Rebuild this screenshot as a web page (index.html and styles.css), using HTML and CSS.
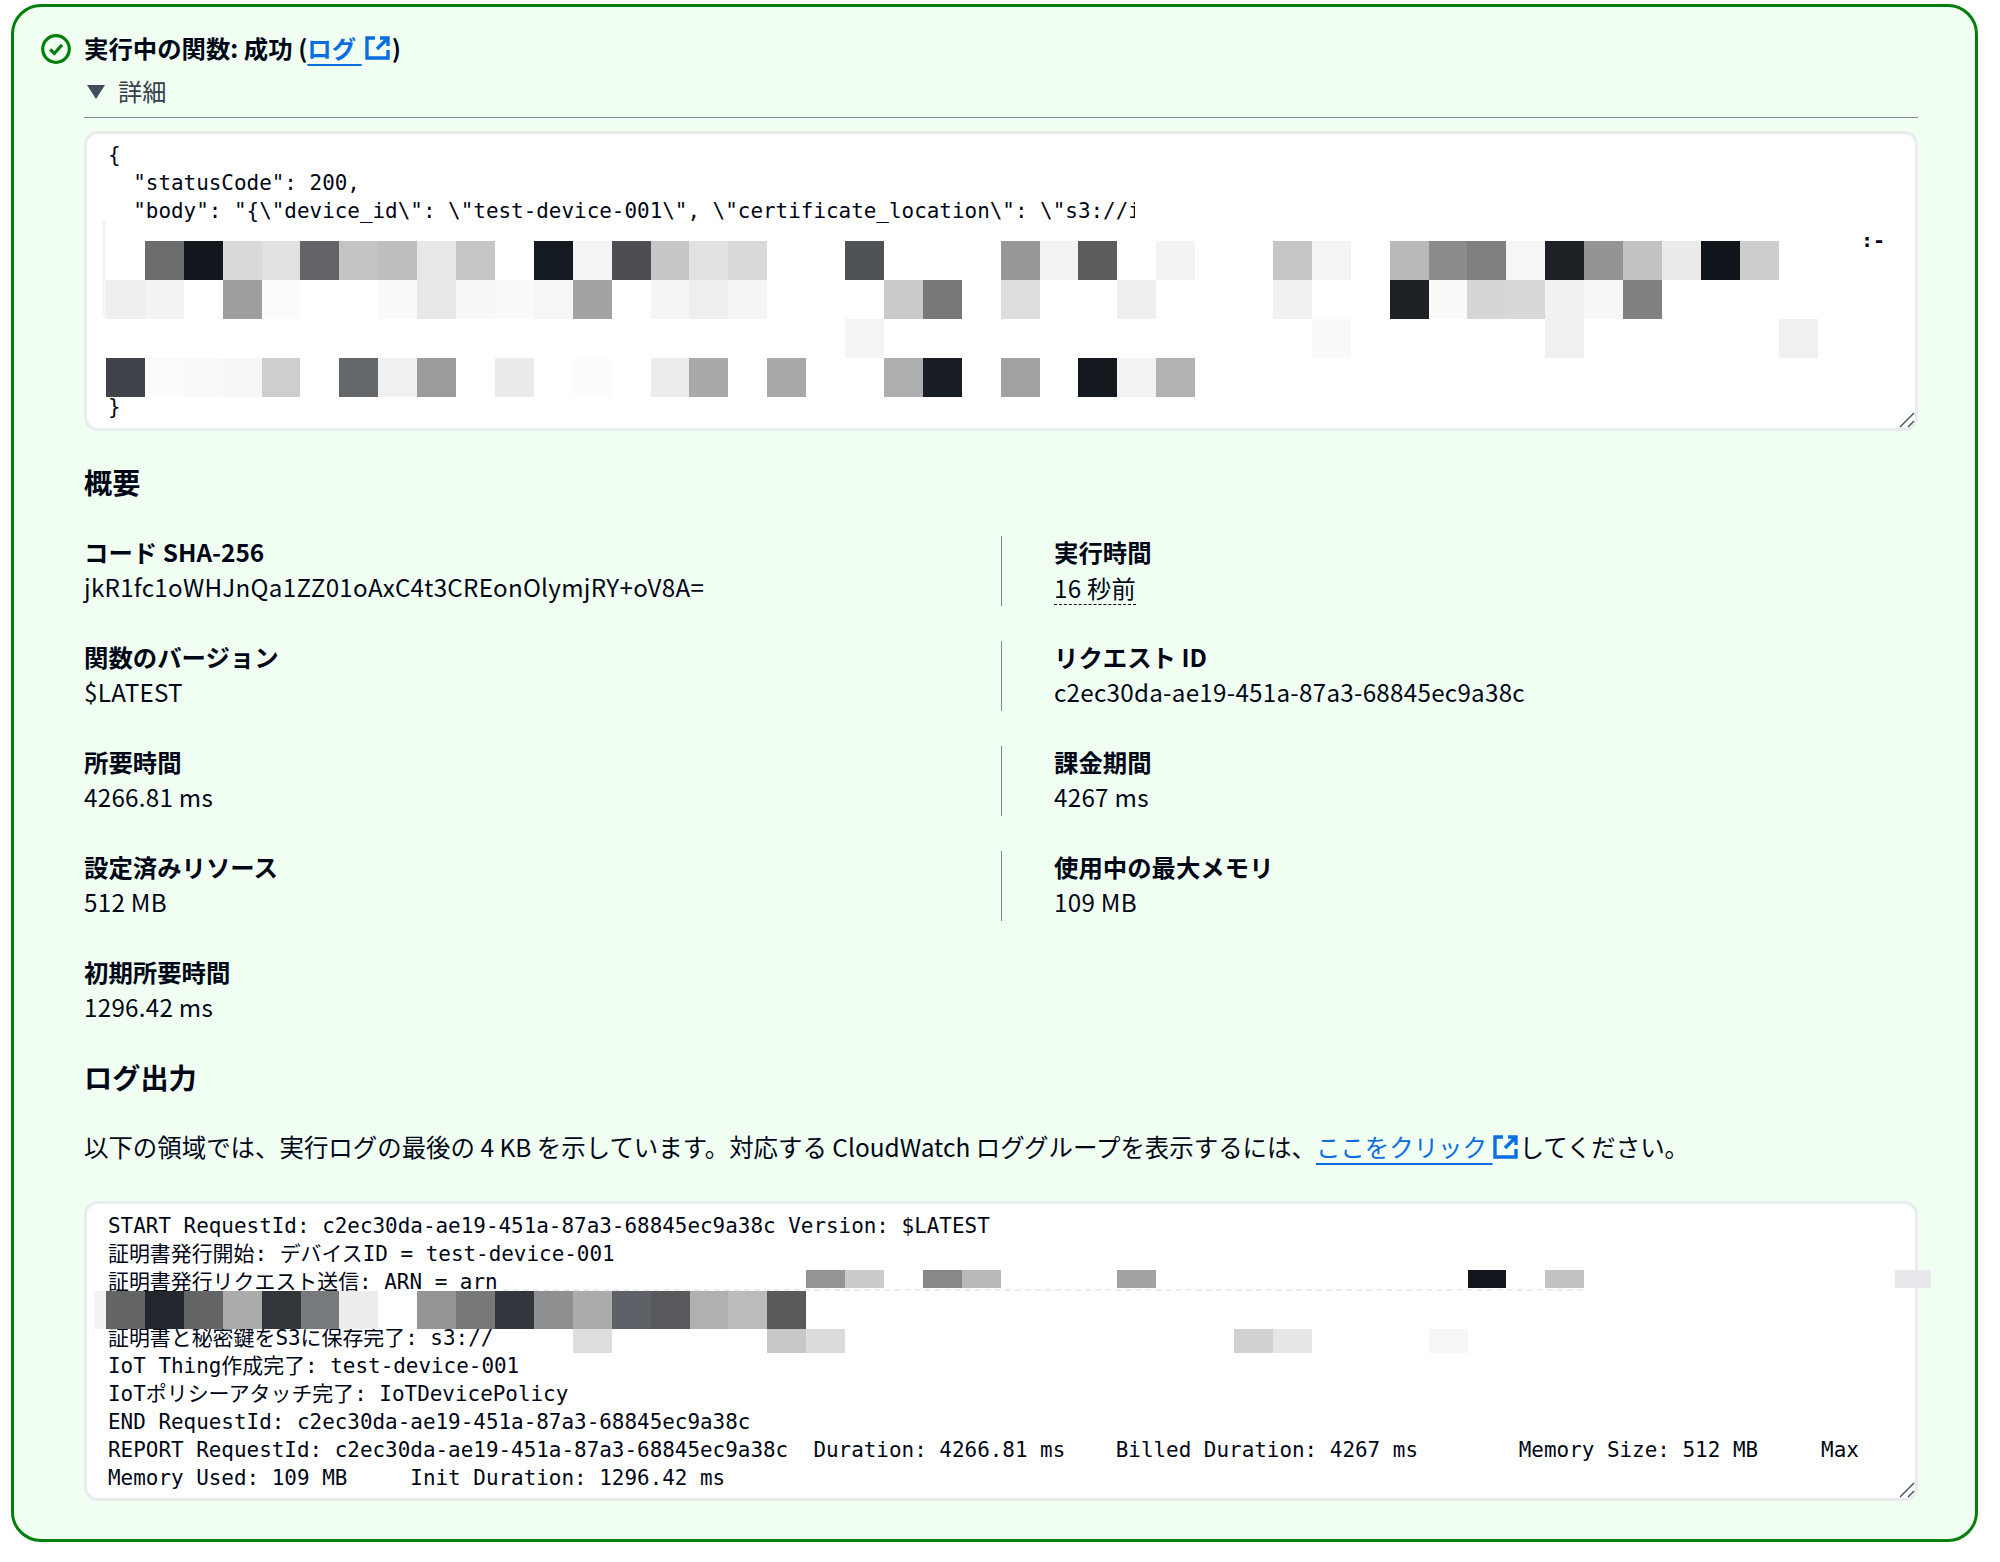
FILE: index.html
```html
<!DOCTYPE html>
<html lang="ja">
<head>
<meta charset="utf-8">
<title>実行中の関数: 成功</title>
<link rel="stylesheet" href="styles.css">
</head>
<body>
<main class="panel">
  <svg class="status-icon" viewBox="0 0 28 28"><circle cx="14" cy="14" r="12.4" fill="none" stroke="#037f0c" stroke-width="3"/><path d="M8.6 14.4l3.8 3.8 7.2-8" fill="none" stroke="#037f0c" stroke-width="3"/></svg>
  <div class="content">
    <h1 class="title">実行中の関数: 成功 (<a class="link" href="#">ログ </a><svg class="ext-icon" viewBox="0 0 25 24"><path d="M10 2H2v20h21v-8M15 2h8v8M23 2L12 13" fill="none" stroke="#0a6ee0" stroke-width="3.4"/></svg>)</h1>
    <div class="summary"><span class="caret"></span>詳細</div>
    <div class="box result">
<pre class="mono">{
  "statusCode": 200,
  "body": "{\"device_id\": \"test-device-001\", \"certificate_location\": \"s3://i






}</pre>
      <div class="cover-strip"></div>
      <svg class="mosaic mosaic-top" viewBox="0 0 44 4" preserveAspectRatio="none" shape-rendering="crispEdges">
        <g>
          <rect x="1" y="0" width="1" height="1" fill="#6b6c6e"/><rect x="2" y="0" width="1" height="1" fill="#12171d"/><rect x="3" y="0" width="1" height="1" fill="#d9dbdb"/><rect x="4" y="0" width="1" height="1" fill="#e2e2e2"/><rect x="5" y="0" width="1" height="1" fill="#636468"/><rect x="6" y="0" width="1" height="1" fill="#c4c4c4"/><rect x="7" y="0" width="1" height="1" fill="#bdbec0"/><rect x="8" y="0" width="1" height="1" fill="#e7e9e8"/><rect x="9" y="0" width="1" height="1" fill="#c6c6c6"/><rect x="11" y="0" width="1" height="1" fill="#141a21"/><rect x="12" y="0" width="1" height="1" fill="#f4f4f4"/><rect x="13" y="0" width="1" height="1" fill="#4d4e52"/><rect x="14" y="0" width="1" height="1" fill="#c6c7c9"/><rect x="15" y="0" width="1" height="1" fill="#e2e2e2"/><rect x="16" y="0" width="1" height="1" fill="#d9d9d9"/><rect x="19" y="0" width="1" height="1" fill="#4f5357"/><rect x="23" y="0" width="1" height="1" fill="#979797"/><rect x="24" y="0" width="1" height="1" fill="#f2f2f2"/><rect x="25" y="0" width="1" height="1" fill="#5b5c5e"/><rect x="27" y="0" width="1" height="1" fill="#f3f3f3"/><rect x="30" y="0" width="1" height="1" fill="#c6c6c6"/><rect x="31" y="0" width="1" height="1" fill="#f4f4f4"/><rect x="33" y="0" width="1" height="1" fill="#b9b9b9"/><rect x="34" y="0" width="1" height="1" fill="#8a8b8d"/><rect x="35" y="0" width="1" height="1" fill="#7e7f81"/><rect x="36" y="0" width="1" height="1" fill="#f6f6f6"/><rect x="37" y="0" width="1" height="1" fill="#1e2125"/><rect x="38" y="0" width="1" height="1" fill="#939496"/><rect x="39" y="0" width="1" height="1" fill="#c2c2c2"/><rect x="40" y="0" width="1" height="1" fill="#eaebea"/><rect x="41" y="0" width="1" height="1" fill="#10151b"/><rect x="42" y="0" width="1" height="1" fill="#cdcdcd"/>
        </g>
        <g>
          <rect x="0" y="1" width="1" height="1" fill="#eeeeee"/><rect x="1" y="1" width="1" height="1" fill="#f3f3f3"/><rect x="3" y="1" width="1" height="1" fill="#9d9e9f"/><rect x="4" y="1" width="1" height="1" fill="#fbfbfb"/><rect x="7" y="1" width="1" height="1" fill="#fafafa"/><rect x="8" y="1" width="1" height="1" fill="#e8e8e8"/><rect x="9" y="1" width="1" height="1" fill="#f8f8f8"/><rect x="10" y="1" width="1" height="1" fill="#fafafa"/><rect x="11" y="1" width="1" height="1" fill="#f5f6f5"/><rect x="12" y="1" width="1" height="1" fill="#a2a3a4"/><rect x="14" y="1" width="1" height="1" fill="#f5f5f5"/><rect x="15" y="1" width="1" height="1" fill="#eeeeee"/><rect x="16" y="1" width="1" height="1" fill="#f5f5f5"/><rect x="20" y="1" width="1" height="1" fill="#c9cbca"/><rect x="21" y="1" width="1" height="1" fill="#77787a"/><rect x="23" y="1" width="1" height="1" fill="#dcdedd"/><rect x="26" y="1" width="1" height="1" fill="#efefef"/><rect x="30" y="1" width="1" height="1" fill="#f0f2f1"/><rect x="33" y="1" width="1" height="1" fill="#1e2226"/><rect x="34" y="1" width="1" height="1" fill="#fafafa"/><rect x="35" y="1" width="1" height="1" fill="#d6d6d6"/><rect x="36" y="1" width="1" height="1" fill="#d8d8d8"/><rect x="37" y="1" width="1" height="1" fill="#f0f1f0"/><rect x="38" y="1" width="1" height="1" fill="#f8f8f8"/><rect x="39" y="1" width="1" height="1" fill="#808183"/>
        </g>
        <g>
          <rect x="19" y="2" width="1" height="1" fill="#f4f4f4"/><rect x="31" y="2" width="1" height="1" fill="#f9f9f9"/><rect x="37" y="2" width="1" height="1" fill="#f0f0f0"/><rect x="43" y="2" width="1" height="1" fill="#f0f0f0"/>
        </g>
        <g>
          <rect x="0" y="3" width="1" height="1" fill="#40444a"/><rect x="1" y="3" width="1" height="1" fill="#fbfbfb"/><rect x="2" y="3" width="1" height="1" fill="#f9f9f9"/><rect x="3" y="3" width="1" height="1" fill="#f6f7f6"/><rect x="4" y="3" width="1" height="1" fill="#cdcfce"/><rect x="6" y="3" width="1" height="1" fill="#64676a"/><rect x="7" y="3" width="1" height="1" fill="#f1f1f1"/><rect x="8" y="3" width="1" height="1" fill="#9a9b9c"/><rect x="10" y="3" width="1" height="1" fill="#ebebeb"/><rect x="12" y="3" width="1" height="1" fill="#fcfcfc"/><rect x="14" y="3" width="1" height="1" fill="#ececec"/><rect x="15" y="3" width="1" height="1" fill="#a8a9a8"/><rect x="17" y="3" width="1" height="1" fill="#a8a9aa"/><rect x="20" y="3" width="1" height="1" fill="#adaeb0"/><rect x="21" y="3" width="1" height="1" fill="#191e25"/><rect x="23" y="3" width="1" height="1" fill="#a2a2a3"/><rect x="25" y="3" width="1" height="1" fill="#14191f"/><rect x="26" y="3" width="1" height="1" fill="#f2f4f3"/><rect x="27" y="3" width="1" height="1" fill="#b1b2b3"/>
        </g>
      </svg>
      <span class="stray mono">:-</span>
      <svg class="grip" viewBox="0 0 16 16"><path d="M1 15L15 1M9 15l6-6" stroke="#414d5c" stroke-width="1.4" fill="none"/></svg>
    </div>

    <h2 class="heading heading-summary">概要</h2>
    <dl class="facts">
      <div class="fact"><dt>コード SHA-256</dt><dd>jkR1fc1oWHJnQa1ZZ01oAxC4t3CREonOlymjRY+oV8A=</dd></div>
      <div class="fact fact-right"><dt>実行時間</dt><dd><span class="ago">16 秒前</span></dd></div>
      <div class="fact"><dt>関数のバージョン</dt><dd>$LATEST</dd></div>
      <div class="fact fact-right"><dt>リクエスト ID</dt><dd>c2ec30da-ae19-451a-87a3-68845ec9a38c</dd></div>
      <div class="fact"><dt>所要時間</dt><dd>4266.81 ms</dd></div>
      <div class="fact fact-right"><dt>課金期間</dt><dd>4267 ms</dd></div>
      <div class="fact"><dt>設定済みリソース</dt><dd>512 MB</dd></div>
      <div class="fact fact-right"><dt>使用中の最大メモリ</dt><dd>109 MB</dd></div>
      <div class="fact"><dt>初期所要時間</dt><dd>1296.42 ms</dd></div>
    </dl>

    <h2 class="heading heading-log">ログ出力</h2>
    <p class="intro">以下の領域では、実行ログの最後の 4 KB を示しています。対応する CloudWatch ロググループを表示するには、<a class="link" href="#">ここをクリック </a><svg class="ext-icon" viewBox="0 0 25 24"><path d="M10 2H2v20h21v-8M15 2h8v8M23 2L12 13" fill="none" stroke="#0a6ee0" stroke-width="3.4"/></svg>してください。</p>
    <div class="box log">
<pre class="mono">START RequestId: c2ec30da-ae19-451a-87a3-68845ec9a38c Version: $LATEST
証明書発行開始: デバイスID = test-device-001
証明書発行リクエスト送信: ARN = arn

証明書と秘密鍵をS3に保存完了: s3://
IoT Thing作成完了: test-device-001
IoTポリシーアタッチ完了: IoTDevicePolicy
END RequestId: c2ec30da-ae19-451a-87a3-68845ec9a38c
REPORT RequestId: c2ec30da-ae19-451a-87a3-68845ec9a38c  Duration: 4266.81 ms    Billed Duration: 4267 ms        Memory Size: 512 MB     Max
Memory Used: 109 MB     Init Duration: 1296.42 ms</pre>
      <div class="dust"></div>
      <svg class="mosaic mosaic-log" viewBox="-0.31 0 47.31 83" preserveAspectRatio="none" shape-rendering="crispEdges">
        <rect x="-0.31" y="21" width="7.31" height="38" fill="#f3f3f3"/>
        <rect x="0" y="21" width="1" height="38" fill="#636466"/><rect x="1" y="21" width="1" height="38" fill="#22272e"/><rect x="2" y="21" width="1" height="38" fill="#636466"/><rect x="3" y="21" width="1" height="38" fill="#ababab"/><rect x="4" y="21" width="1" height="38" fill="#32363b"/><rect x="5" y="21" width="1" height="38" fill="#777a7d"/><rect x="6" y="21" width="1" height="38" fill="#ededed"/>
        <rect x="8" y="21" width="1" height="38" fill="#949596"/><rect x="9" y="21" width="1" height="38" fill="#777879"/><rect x="10" y="21" width="1" height="38" fill="#33363c"/><rect x="11" y="21" width="1" height="38" fill="#8e8f90"/><rect x="12" y="21" width="1" height="38" fill="#ababac"/><rect x="13" y="21" width="1" height="38" fill="#5e6167"/><rect x="14" y="21" width="1" height="38" fill="#58595c"/><rect x="15" y="21" width="1" height="38" fill="#b0b0b1"/><rect x="16" y="21" width="1" height="38" fill="#bbbbbc"/><rect x="17" y="21" width="1" height="38" fill="#5a5a5c"/>
        <rect x="18" y="0" width="1" height="18" fill="#959596"/><rect x="19" y="0" width="1" height="18" fill="#cacbcb"/><rect x="21" y="0" width="1" height="18" fill="#878889"/><rect x="22" y="0" width="1" height="18" fill="#b9b9ba"/><rect x="26" y="0" width="1" height="18" fill="#a3a3a4"/><rect x="35" y="0" width="1" height="18" fill="#12161d"/><rect x="37" y="0" width="1" height="18" fill="#c2c2c4"/><rect x="46" y="0" width="0.9" height="18" fill="#e9e9ed"/>
        <rect x="12" y="59" width="1" height="24" fill="#dddddd"/><rect x="17" y="59" width="1" height="24" fill="#c8c8c9"/><rect x="18" y="59" width="1" height="24" fill="#dcdcdc"/><rect x="29" y="59" width="1" height="24" fill="#d1d1d1"/><rect x="30" y="59" width="1" height="24" fill="#e6e6e6"/><rect x="34" y="59" width="1" height="24" fill="#f6f6f6"/>
      </svg>
      <svg class="grip" viewBox="0 0 16 16"><path d="M1 15L15 1M9 15l6-6" stroke="#414d5c" stroke-width="1.4" fill="none"/></svg>
    </div>
  </div>
</main>
</body>
</html>
```

FILE: styles.css
```css
* { box-sizing: border-box; }
html, body { margin: 0; padding: 0; background: #fff; }
body {
  font-family: "Noto Sans CJK JP", "Noto Sans", sans-serif;
  font-size: 24.2px;
  line-height: 35px;
  color: #000716;
}
.panel {
  display: flex;
  align-items: flex-start;
  gap: 13px;
  margin: 4px 22px 20px 11px;
  padding: 24px 57px 38px 27px;
  border: 3px solid #037f0c;
  border-radius: 30px;
  background: #f0fff2;
}
.status-icon { flex: none; width: 30px; height: 30px; margin-top: 3px; }
.content { flex: 1; min-width: 0; }
.title { margin: 0; font-size: 24.4px; line-height: 33px; font-weight: 700; }
.link {
  color: #0a6ee0;
  font-weight: inherit;
  text-decoration: underline 2px #0a6ee0;
  text-underline-offset: 6px;
  text-decoration-skip-ink: none;
}
.ext-icon { width: 25px; height: 24px; vertical-align: -2px; margin: 0 1px; }
.title .ext-icon { margin: 0 2px 0 3px; }
.summary { display: flex; align-items: center; margin-top: 10px; margin-bottom: 25px; height: 32px; color: #353f4c; }
.caret {
  width: 0; height: 0; margin: 4px 13px 0 3px;
  border-left: 9px solid transparent;
  border-right: 9px solid transparent;
  border-top: 14px solid #414d5c;
}
.box {
  position: relative;
  border: 3px solid #e9ebed;
  border-radius: 14px;
  background: #fff;
}
.result { padding: 7px 21px 7px; }
.result::before {
  content: "";
  position: absolute;
  left: -3px; right: -3px; top: -17px;
  border-top: 1.5px solid #7d8998;
}
.mono {
  margin: 0;
  font-family: "DejaVu Sans Mono", "Noto Sans CJK JP", monospace;
  font-size: 20.93px;
  line-height: 28px;
  color: #000716;
}
pre.mono { white-space: pre; }
.mosaic { position: absolute; display: block; overflow: visible; }
.mosaic-top { left: 19px; top: 107px; width: 1711.6px; height: 156px; }
.cover-strip {
  position: absolute;
  left: 15px; top: 86px;
  width: 4px; height: 98px;
  background: #f4f7f7;
}
.cover-strip::after {
  content: "";
  position: absolute;
  left: 1033px; top: -25px;
  width: 100px; height: 30px;
  background: #fff;
}
.stray { position: absolute; left: 1774px; top: 92px; font-size: 20px; font-weight: 700; line-height: 28px; }
.grip { position: absolute; right: 0; bottom: 0; width: 16px; height: 16px; }
.heading { margin: 0; font-size: 28.2px; line-height: 40px; font-weight: 700; }
.heading-summary { margin-top: 30.5px; }
.facts {
  display: grid;
  grid-template-columns: 1fr 1fr;
  row-gap: 35px;
  margin: 34.5px 0 0;
}
.fact { height: 70px; }
.fact-right { border-left: 1px solid #7d8998; padding-left: 52px; }
.fact dt { font-weight: 700; line-height: 32px; margin-bottom: 3px; font-size: 24.4px; }
.fact dd { margin: 0; line-height: 32px; letter-spacing: 0.27px; }
.ago { display: inline-block; line-height: 33px; border-bottom: 1px dashed #000716; }
.heading-log { margin-top: 30.5px; }
.intro { margin: 32.2px 0 37.3px; font-size: 24.45px; }
.log { padding: 8px 21px 6px; }
.mosaic-log { left: 7px; top: 66px; width: 1840.4px; height: 83px; }
.dust {
  position: absolute;
  left: 416px; top: 85px;
  width: 1080px; height: 0;
  border-top: 2px dashed #ececec;
}
```
